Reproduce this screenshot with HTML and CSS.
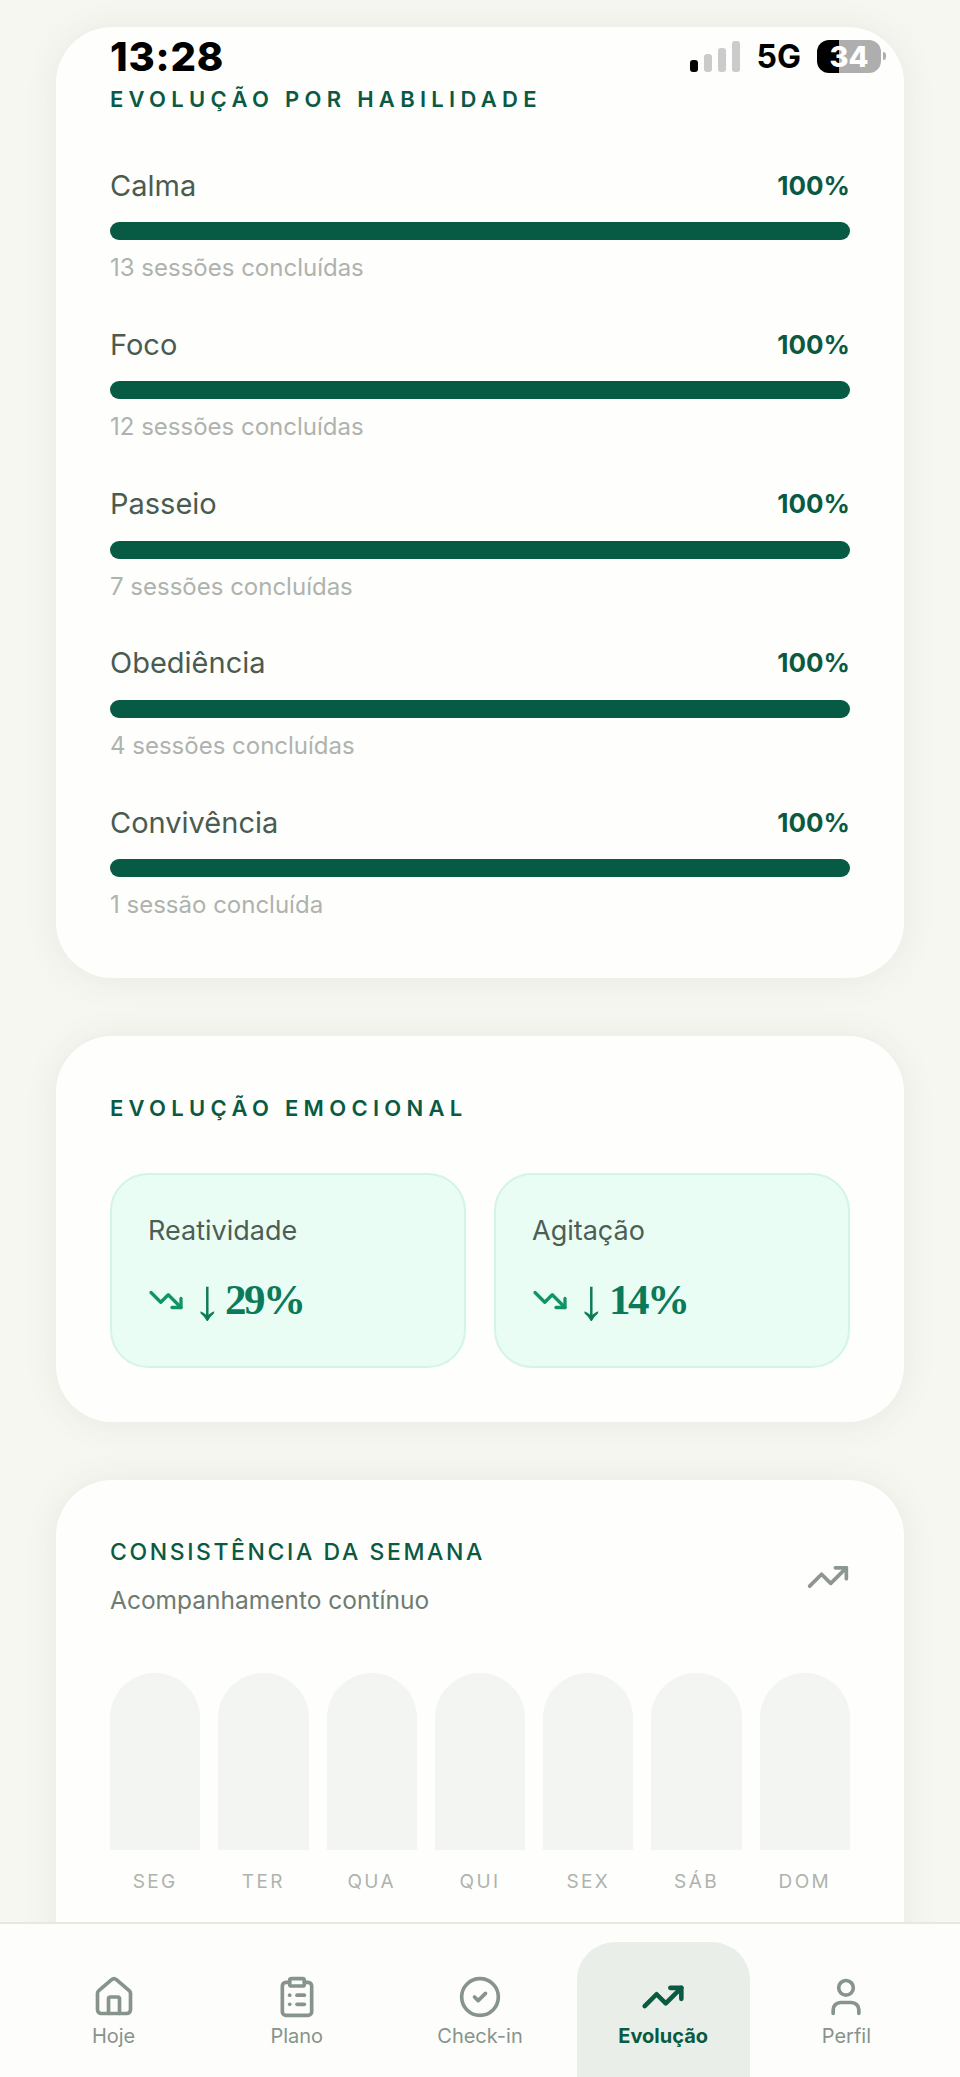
FILE: index.html
```html
<!DOCTYPE html>
<html lang="pt-br">
<head>
    <meta charset="UTF-8">
    <meta name="viewport" content="width=device-width, initial-scale=1.0">
    <title>Evolução</title>
    <link rel="stylesheet" href="styles.css">
</head>
<body>
    <div class="status-bar">
        <span class="status-time">13:28</span>
        <div class="status-right">
            <div class="signal">
                <span class="signal-bar on s1"></span>
                <span class="signal-bar s2"></span>
                <span class="signal-bar s3"></span>
                <span class="signal-bar s4"></span>
            </div>
            <span class="status-net">5G</span>
            <div class="battery"><span>34</span></div>
            <span class="battery-nub"></span>
        </div>
    </div>

    <main class="page">
        <section class="card">
            <h2 class="section-title">EVOLUÇÃO POR HABILIDADE</h2>
            <div class="skills">
                <div class="skill">
                    <div class="skill-head"><span class="skill-name">Calma</span><span class="skill-pct">100%</span></div>
                    <div class="skill-bar"></div>
                    <p class="skill-note">13 sessões concluídas</p>
                </div>
                <div class="skill">
                    <div class="skill-head"><span class="skill-name">Foco</span><span class="skill-pct">100%</span></div>
                    <div class="skill-bar"></div>
                    <p class="skill-note">12 sessões concluídas</p>
                </div>
                <div class="skill">
                    <div class="skill-head"><span class="skill-name">Passeio</span><span class="skill-pct">100%</span></div>
                    <div class="skill-bar"></div>
                    <p class="skill-note">7 sessões concluídas</p>
                </div>
                <div class="skill">
                    <div class="skill-head"><span class="skill-name">Obediência</span><span class="skill-pct">100%</span></div>
                    <div class="skill-bar"></div>
                    <p class="skill-note">4 sessões concluídas</p>
                </div>
                <div class="skill">
                    <div class="skill-head"><span class="skill-name">Convivência</span><span class="skill-pct">100%</span></div>
                    <div class="skill-bar"></div>
                    <p class="skill-note">1 sessão concluída</p>
                </div>
            </div>
        </section>

        <section class="card card-emotions">
            <h2 class="section-title">EVOLUÇÃO EMOCIONAL</h2>
            <div class="emotions">
                <div class="emotion">
                    <p class="emotion-name">Reatividade</p>
                    <div class="emotion-value">
                        <svg class="icon-down" viewBox="0 0 24 24"><path d="M22 17 13.5 8.5l-5 5L2 7"/><path d="M16 17h6v-6"/></svg>
                        <span class="emotion-arrow">↓</span>
                        <span class="emotion-pct">29%</span>
                    </div>
                </div>
                <div class="emotion">
                    <p class="emotion-name">Agitação</p>
                    <div class="emotion-value">
                        <svg class="icon-down" viewBox="0 0 24 24"><path d="M22 17 13.5 8.5l-5 5L2 7"/><path d="M16 17h6v-6"/></svg>
                        <span class="emotion-arrow">↓</span>
                        <span class="emotion-pct">14%</span>
                    </div>
                </div>
            </div>
        </section>

        <section class="card card-week">
            <div class="week-head">
                <div>
                    <h2 class="week-title">CONSISTÊNCIA DA SEMANA</h2>
                    <p class="week-sub">Acompanhamento contínuo</p>
                </div>
                <svg class="icon-trend" viewBox="0 0 24 24"><path d="M22 7 13.5 15.5l-5-5L2 17"/><path d="M16 7h6v6"/></svg>
            </div>
            <div class="week-grid">
                <div class="day"><div class="day-bar"></div><span>SEG</span></div>
                <div class="day"><div class="day-bar"></div><span>TER</span></div>
                <div class="day"><div class="day-bar"></div><span>QUA</span></div>
                <div class="day"><div class="day-bar"></div><span>QUI</span></div>
                <div class="day"><div class="day-bar"></div><span>SEX</span></div>
                <div class="day"><div class="day-bar"></div><span>SÁB</span></div>
                <div class="day"><div class="day-bar"></div><span>DOM</span></div>
            </div>
        </section>
    </main>

    <nav class="tabbar">
        <a class="tab">
            <svg viewBox="0 0 24 24"><path d="M15 21v-8a1 1 0 0 0-1-1h-4a1 1 0 0 0-1 1v8"/><path d="M3 10a2 2 0 0 1 .709-1.528l7-5.999a2 2 0 0 1 2.582 0l7 5.999A2 2 0 0 1 21 10v9a2 2 0 0 1-2 2H5a2 2 0 0 1-2-2z"/></svg>
            <span>Hoje</span>
        </a>
        <a class="tab">
            <svg viewBox="0 0 24 24"><rect x="8" y="2" width="8" height="4" rx="1"/><path d="M16 4h2a2 2 0 0 1 2 2v14a2 2 0 0 1-2 2H6a2 2 0 0 1-2-2V6a2 2 0 0 1 2-2h2"/><path d="M12 11h4"/><path d="M12 16h4"/><path d="M8 11h.01"/><path d="M8 16h.01"/></svg>
            <span>Plano</span>
        </a>
        <a class="tab">
            <svg viewBox="0 0 24 24"><circle cx="12" cy="12" r="10"/><path d="m9 12 2 2 4-4"/></svg>
            <span>Check-in</span>
        </a>
        <a class="tab tab-active">
            <svg viewBox="0 0 24 24"><path d="M22 7 13.5 15.5l-5-5L2 17"/><path d="M16 7h6v6"/></svg>
            <span>Evolução</span>
        </a>
        <a class="tab">
            <svg viewBox="0 0 24 24"><path d="M19 21v-2a4 4 0 0 0-4-4H9a4 4 0 0 0-4 4v2"/><circle cx="12" cy="7" r="4"/></svg>
            <span>Perfil</span>
        </a>
    </nav>
</body>
</html>
```

FILE: styles.css
```css
* {
    box-sizing: border-box;
}

html, body {
    height: 2077px;
}

body {
    margin: 0;
    overflow: hidden;
    position: relative;
    font-family: Inter, "Noto Sans", sans-serif;
    background-color: #f7f7f2;
}

p, h2 {
    margin: 0;
}

/* barra de status */
.status-bar {
    position: absolute;
    top: 37px;
    left: 110px;
    right: 74px;
    height: 38px;
    display: flex;
    justify-content: space-between;
    align-items: center;
    z-index: 5;
}

.status-time {
    font-size: 40px;
    font-weight: 800;
    letter-spacing: 0.8px;
    color: #000;
}

.status-right {
    display: flex;
    align-items: center;
}

.signal {
    display: flex;
    align-items: flex-end;
    gap: 6px;
    height: 31px;
    margin-right: 17px;
}

.signal-bar {
    width: 8px;
    border-radius: 3px;
    background: #cbcbcb;
}

.signal-bar.on {
    background: #000;
}

.s1 { height: 12px; }
.s2 { height: 18px; }
.s3 { height: 24px; }
.s4 { height: 31px; }

.status-net {
    font-size: 32px;
    font-weight: 700;
    color: #000;
    margin-right: 16px;
}

.battery {
    width: 64px;
    height: 33px;
    border-radius: 12px;
    background: linear-gradient(to right, #000 34%, #aeaeae 34%);
    display: flex;
    align-items: center;
    justify-content: center;
    color: #fff;
    font-size: 29px;
    font-weight: 800;
}

.battery-nub {
    width: 3px;
    height: 8px;
    margin-left: 2px;
    border-radius: 0 3px 3px 0;
    background: #aeaeae;
}

/* cards */
.page {
    padding: 27px 56px 0;
    display: flex;
    flex-direction: column;
    gap: 58px;
}

.card {
    background: #fefefc;
    border-radius: 56px;
    padding: 59px 54px;
    box-shadow: 0 0 0 1px #f0f0ea, 0 2px 34px rgba(70, 70, 30, 0.08);
}

.section-title {
    font-size: 22px;
    line-height: 26px;
    font-weight: 600;
    letter-spacing: 5.3px;
    color: #0a5a43;
}

.skills {
    margin-top: 57px;
    display: flex;
    flex-direction: column;
    gap: 46.25px;
}

.skill-head {
    display: flex;
    justify-content: space-between;
    align-items: center;
    height: 32px;
}

.skill-name {
    font-size: 29px;
    color: #4a5b50;
}

.skill-pct {
    font-size: 26px;
    font-weight: 700;
    color: #0a5a43;
}

.skill-bar {
    height: 18px;
    margin-top: 21px;
    border-radius: 9px;
    background: #075a43;
}

.skill-note {
    margin-top: 14px;
    font-size: 24px;
    line-height: 28px;
    color: #aeb3ae;
}

/* evolucao emocional */
.card-emotions {
    padding-bottom: 54px;
}

.emotions {
    margin-top: 52px;
    display: grid;
    grid-template-columns: 1fr 1fr;
    gap: 28px;
}

.emotion {
    height: 195px;
    padding: 40px 36px 0;
    background: #eafdf5;
    border: 2px solid #d2f5e6;
    border-radius: 38px;
}

.emotion-name {
    font-size: 27px;
    line-height: 32px;
    color: #4d5e54;
}

.emotion-value {
    margin-top: 28px;
    display: flex;
    align-items: center;
    font-family: "Liberation Serif", serif;
    line-height: 50px;
    color: #0b7a58;
}

.emotion-arrow {
    margin-left: 9px;
    font-size: 58px;
    line-height: 50px;
}

.emotion-pct {
    margin-left: 3px;
    font-size: 43px;
    font-weight: 700;
    letter-spacing: -2.5px;
}

.icon-down {
    width: 36px;
    height: 36px;
    fill: none;
    stroke: #0f9466;
    stroke-width: 2.2;
    stroke-linecap: round;
    stroke-linejoin: round;
}

/* consistencia */
.card-week {
    height: 620px;
}

.week-head {
    display: flex;
    justify-content: space-between;
    align-items: center;
}

.week-title {
    font-size: 23px;
    line-height: 26px;
    font-weight: 500;
    letter-spacing: 2.6px;
    color: #0a5a43;
}

.week-sub {
    margin-top: 20px;
    font-size: 24.5px;
    line-height: 30px;
    color: #6e7b72;
}

.icon-trend {
    width: 44px;
    height: 44px;
    fill: none;
    stroke: #8b978f;
    stroke-width: 2;
    stroke-linecap: round;
    stroke-linejoin: round;
}

.week-grid {
    margin-top: 58px;
    display: grid;
    grid-template-columns: repeat(7, 1fr);
    gap: 18px;
}

.day {
    display: flex;
    flex-direction: column;
    align-items: center;
}

.day-bar {
    width: 100%;
    height: 177px;
    border-radius: 45px 45px 0 0;
    background: #f3f5f2;
}

.day span {
    margin-top: 20px;
    font-size: 19px;
    line-height: 24px;
    letter-spacing: 2.4px;
    color: #aeb3ae;
}

/* barra inferior */
.tabbar {
    position: absolute;
    left: 0;
    right: 0;
    top: 1922px;
    height: 155px;
    padding: 18px 27px 0;
    display: grid;
    grid-template-columns: repeat(5, 1fr);
    gap: 10px;
    background: rgba(253, 253, 251, 0.97);
    border-top: 2px solid #e8e8dd;
    z-index: 4;
}

.tab {
    display: flex;
    flex-direction: column;
    align-items: center;
    padding-top: 33px;
    border-radius: 38px 38px 0 0;
    color: #87948b;
    font-size: 20px;
    line-height: 26px;
}

.tab svg {
    width: 44px;
    height: 44px;
    margin-bottom: 4px;
    fill: none;
    stroke: #87948b;
    stroke-width: 2;
    stroke-linecap: round;
    stroke-linejoin: round;
}

.tab-active {
    background: #e9efe8;
    color: #0a5a43;
    font-weight: 700;
}

.tab-active svg {
    stroke: #0a5a43;
    stroke-width: 2.5;
}
```
